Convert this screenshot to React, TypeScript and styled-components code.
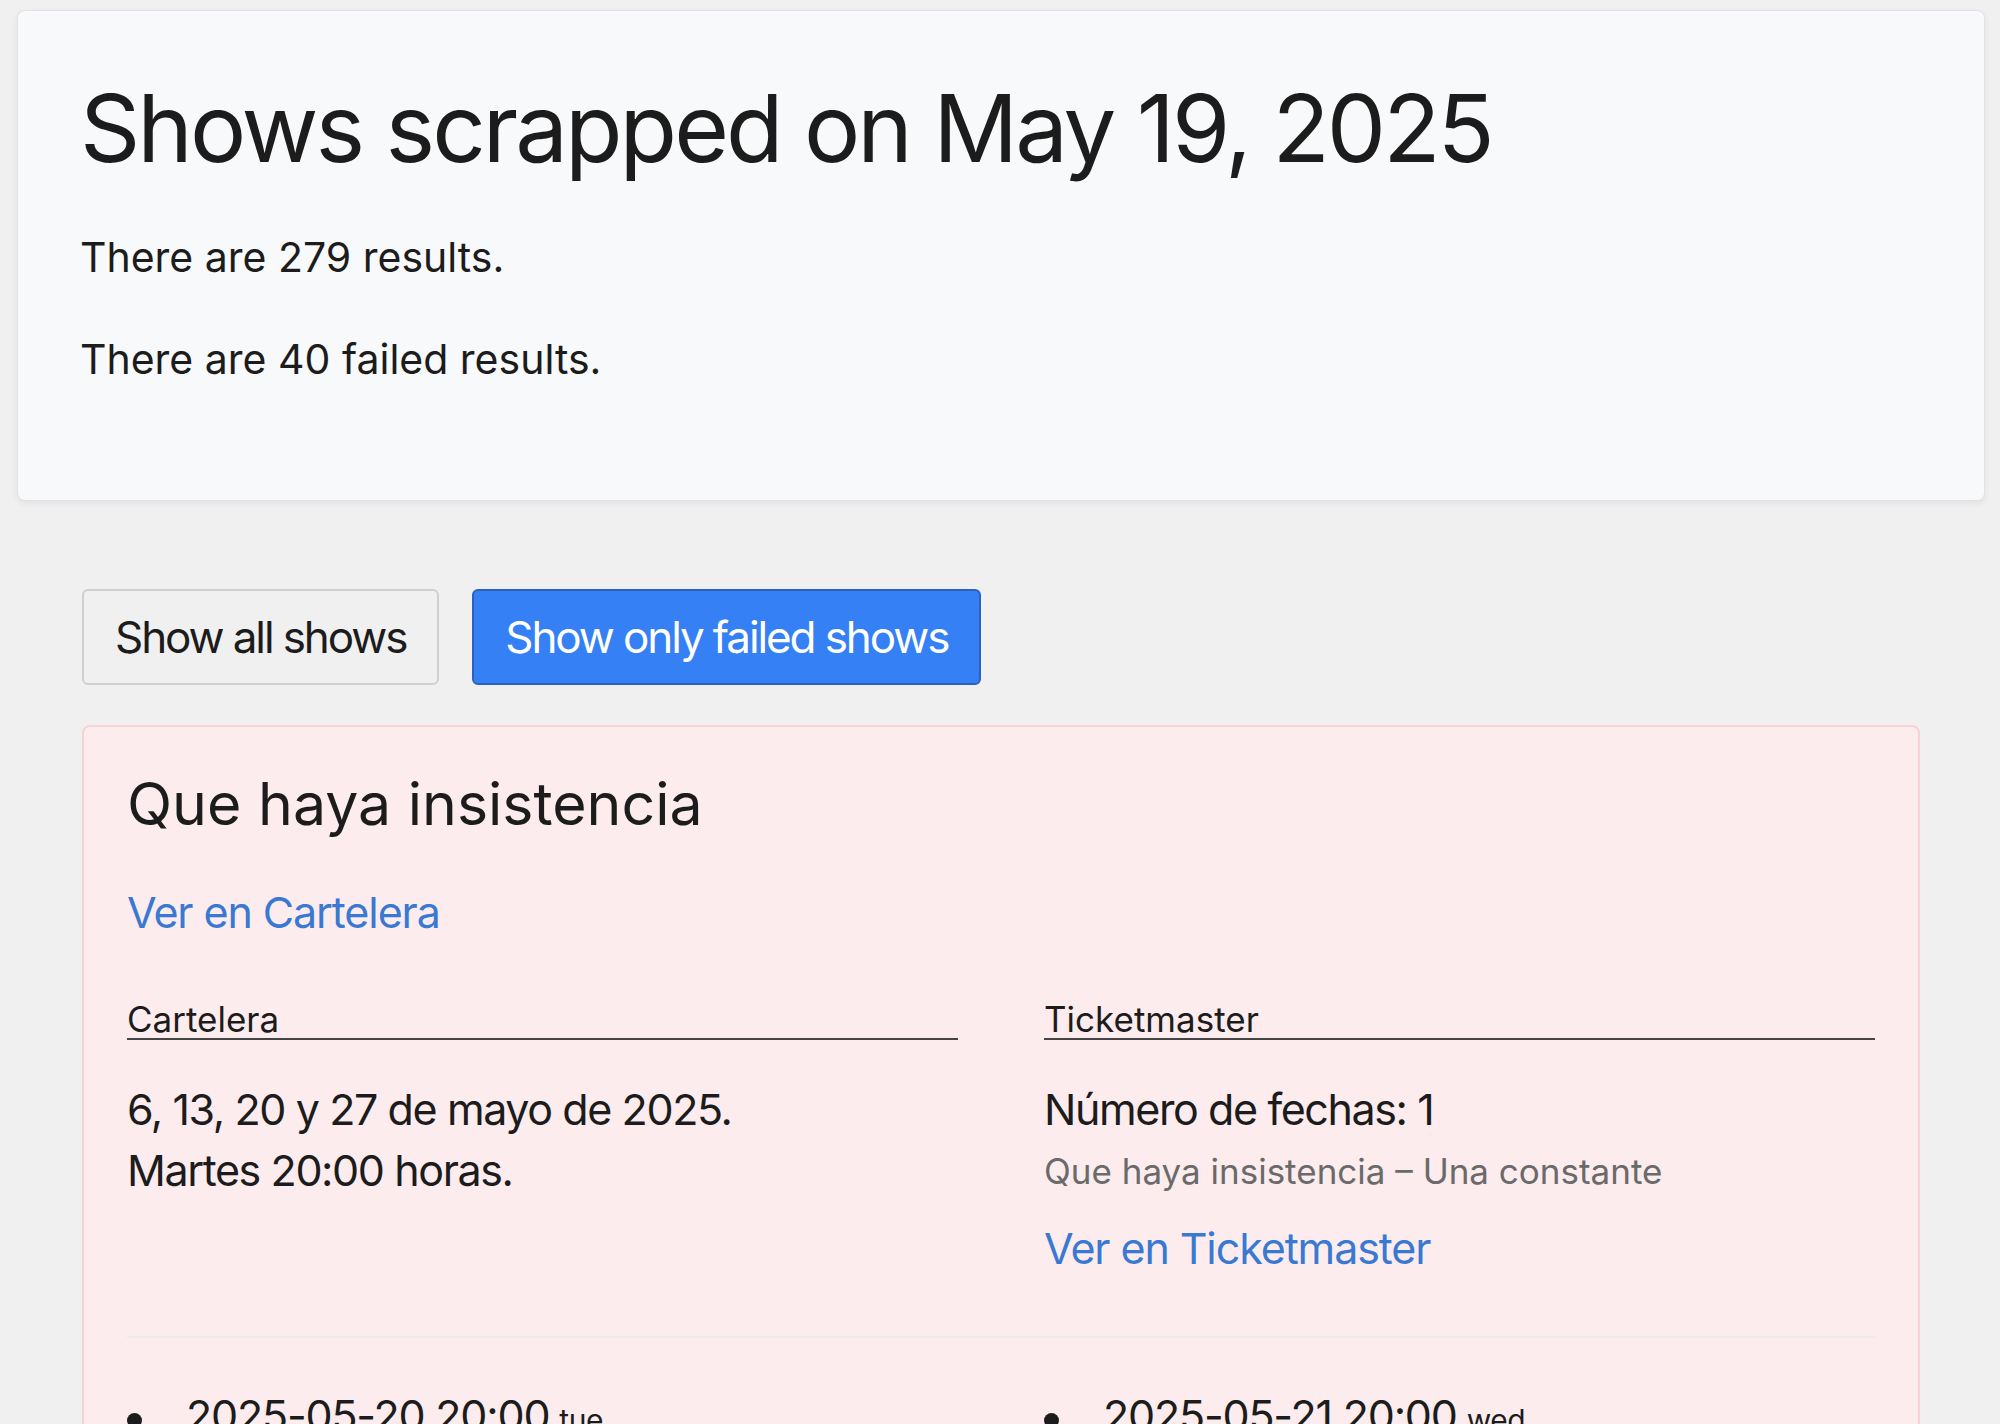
import React from 'react';
import styled, { createGlobalStyle } from 'styled-components';

const GlobalStyle = createGlobalStyle`
  html, body {
    margin: 0;
    padding: 0;
    background: #f0f0f0;
  }
  body {
    font-family: Inter, 'Noto Sans', 'Liberation Sans', sans-serif;
    color: #1c1c1c;
  }
`;

const Page = styled.div`
  padding: 10px 15px 0 17px;
`;

const Summary = styled.header`
  background: #f8f9fb;
  border: 1px solid #e2e3e8;
  border-radius: 8px;
  box-shadow: 0 2px 6px rgba(0, 0, 0, 0.07);
  padding: 61px 62px 109px;
`;

const Title = styled.h1`
  margin: 0 0 42px;
  font-size: 94px;
  font-weight: 400;
  line-height: 1.2;
  letter-spacing: -3px;
`;

const Stat = styled.p`
  margin: 0 0 41px;
  font-size: 41px;
  line-height: 1.5;
  &:last-child {
    margin-bottom: 0;
  }
`;

const Content = styled.main`
  padding: 88px 65px 0 65px;
`;

const Toolbar = styled.div`
  display: flex;
  gap: 33px;
  margin-bottom: 40px;
`;

const FilterButton = styled.button<{ $active?: boolean }>`
  height: 96px;
  padding: 0 31px;
  border-radius: 6px;
  font-family: inherit;
  font-size: 44px;
  letter-spacing: -2.1px;
  cursor: pointer;
  border: 2px solid ${p => (p.$active ? '#2a62bd' : '#d0d0d0')};
  background: ${p => (p.$active ? '#3580f5' : '#f0f0f0')};
  color: ${p => (p.$active ? '#ffffff' : '#1c1c1c')};
`;

const ShowCard = styled.section`
  background: #fdecee;
  border: 2px solid #f6d3d7;
  border-radius: 8px;
  padding: 42px 43px 0;
`;

const ShowTitle = styled.h2`
  margin: 0 0 40px;
  font-size: 59px;
  font-weight: 400;
  line-height: 1.2;
`;

const Link = styled.a`
  display: block;
  color: #3a79d2;
  text-decoration: none;
  font-size: 43px;
  line-height: 1.5;
  letter-spacing: -1.1px;
`;

const SourceGrid = styled.div`
  display: grid;
  grid-template-columns: 1fr 1fr;
  column-gap: 86px;
`;

const Sources = styled(SourceGrid)`
  margin-top: 56px;
`;

const SourceLabel = styled.h3`
  margin: 0 0 39px;
  font-size: 35px;
  font-weight: 400;
  line-height: 38px;
  border-bottom: 2px solid #444;
`;

const Info = styled.p`
  margin: 0;
  font-size: 43px;
  line-height: 61px;
  letter-spacing: -1.4px;
`;

const Subtitle = styled.p`
  margin: 5px 0 18px;
  font-size: 35px;
  line-height: 1.5;
  color: #6a6a6a;
`;

const Divider = styled.hr`
  margin: 56px 0 45px;
  border: none;
  border-top: 2px solid #ecebeb;
`;

const DateList = styled.ul`
  margin: 0;
  padding: 0;
  list-style: none;
`;

const DateItem = styled.li`
  display: flex;
  align-items: baseline;
  font-size: 43px;
  line-height: 1.5;
  letter-spacing: -1.2px;
  &::before {
    content: '';
    flex: none;
    width: 15px;
    height: 15px;
    border-radius: 50%;
    background: #1c1c1c;
    margin-right: 44px;
    transform: translateY(-3px);
  }
`;

const Weekday = styled.small`
  font-size: 30px;
  letter-spacing: -0.5px;
  margin-left: 10px;
`;

const App: React.FC = () => {
  return (
    <>
      <GlobalStyle />
      <Page>
        <Summary>
          <Title>Shows scrapped on May 19, 2025</Title>
          <Stat>There are 279 results.</Stat>
          <Stat>There are 40 failed results.</Stat>
        </Summary>
        <Content>
          <Toolbar>
            <FilterButton>Show all shows</FilterButton>
            <FilterButton $active>Show only failed shows</FilterButton>
          </Toolbar>
          <ShowCard>
            <ShowTitle>Que haya insistencia</ShowTitle>
            <Link href="#">Ver en Cartelera</Link>
            <Sources>
              <div>
                <SourceLabel>Cartelera</SourceLabel>
                <Info>6, 13, 20 y 27 de mayo de 2025.</Info>
                <Info>Martes 20:00 horas.</Info>
              </div>
              <div>
                <SourceLabel>Ticketmaster</SourceLabel>
                <Info>Número de fechas: 1</Info>
                <Subtitle>Que haya insistencia – Una constante</Subtitle>
                <Link href="#">Ver en Ticketmaster</Link>
              </div>
            </Sources>
            <Divider />
            <SourceGrid>
              <DateList>
                <DateItem>
                  2025-05-20 20:00<Weekday>tue</Weekday>
                </DateItem>
              </DateList>
              <DateList>
                <DateItem>
                  2025-05-21 20:00<Weekday>wed</Weekday>
                </DateItem>
              </DateList>
            </SourceGrid>
          </ShowCard>
        </Content>
      </Page>
    </>
  );
};

export default App;
